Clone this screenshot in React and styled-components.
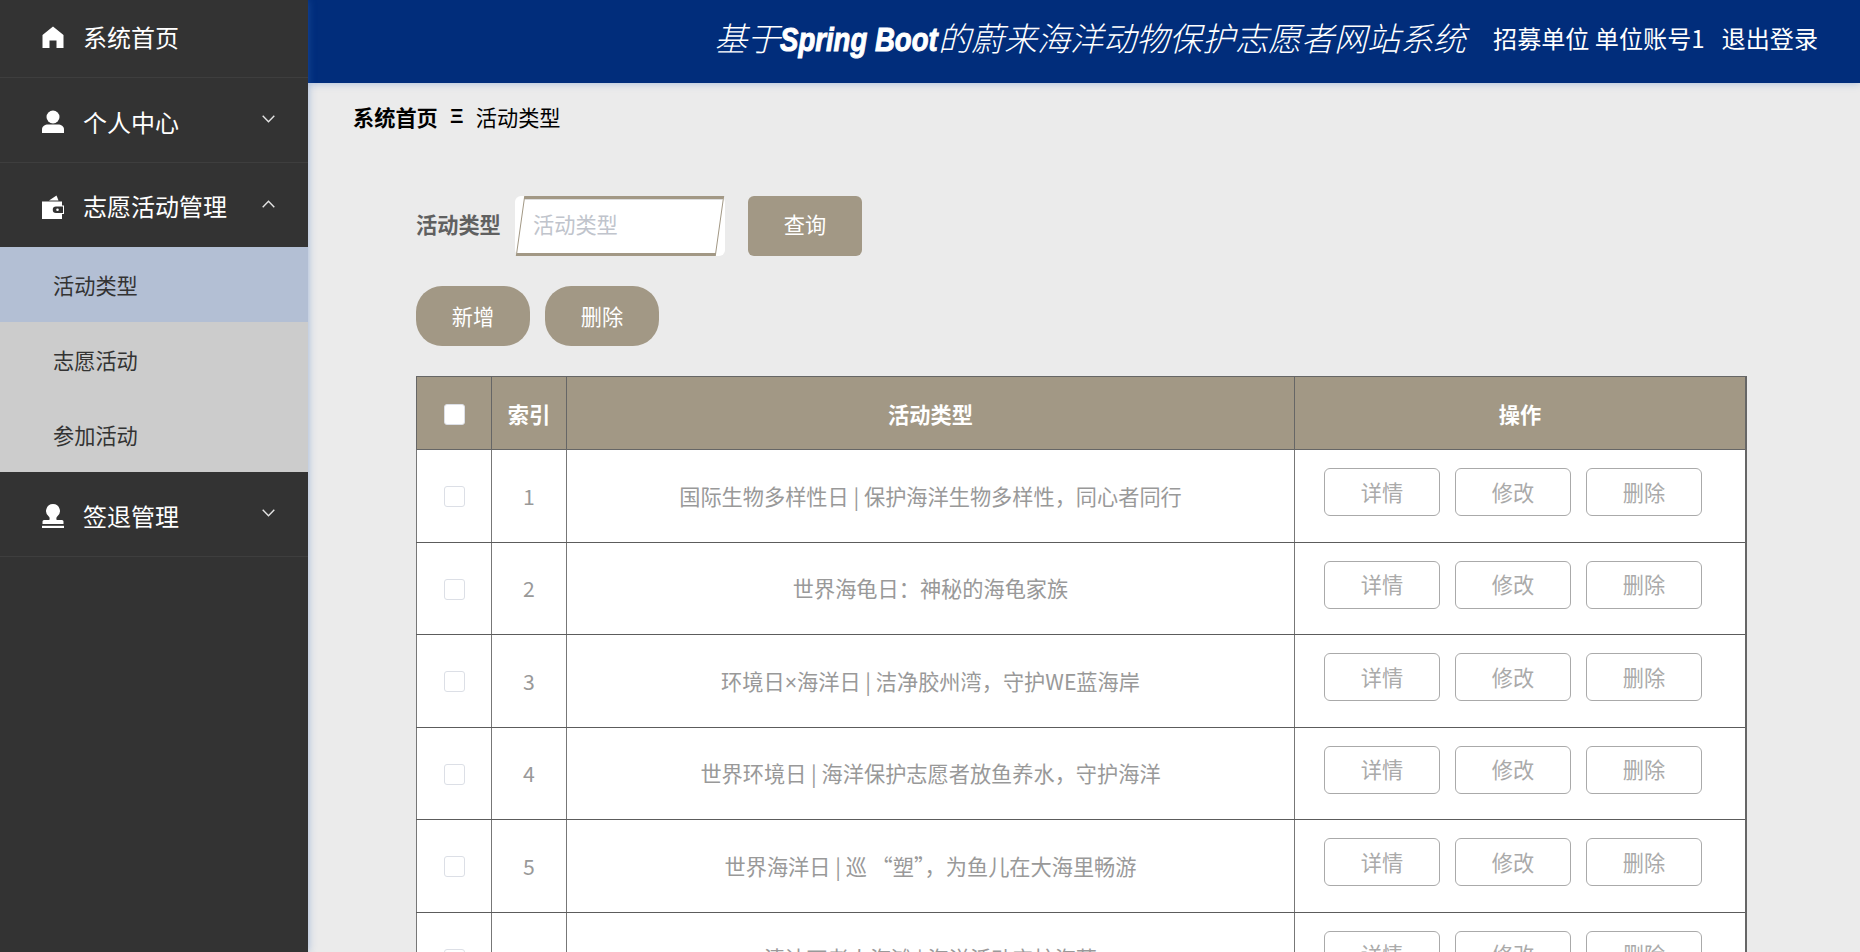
import React from 'react';
import styled, { createGlobalStyle } from 'styled-components';

const FONT = '"Noto Sans CJK SC", "Liberation Sans", sans-serif';
const TAN = '#a29885';

const GlobalStyle = createGlobalStyle`
  html, body {
    margin: 0;
    padding: 0;
    height: 100%;
    overflow: hidden;
    background: #ebebeb;
    font-family: ${FONT};
  }
  * {
    box-sizing: border-box;
  }
`;

const Page = styled.div`
  display: flex;
  height: 952px;
  overflow: hidden;
`;

const Sidebar = styled.aside`
  flex: 0 0 308px;
  height: 100%;
  background: #333;
  box-shadow: 0 0 8px rgba(60, 110, 190, 0.45);
  position: relative;
  z-index: 2;
`;

const menuHeight = (props) => {
  if (props.$first) return '78px';
  return props.$flat ? '84px' : '85px';
};

const MenuItem = styled.div`
  display: flex;
  align-items: center;
  height: ${menuHeight};
  padding: ${props => (props.$first ? '0 33px 4px 42px' : '3px 33px 0 42px')};
  border-bottom: 1px solid ${props => (props.$flat ? 'transparent' : '#3e3e3e')};
  color: #fff;
`;

const MenuIcon = styled.svg`
  flex: 0 0 22px;
  width: 22px;
  height: 24px;
  margin-top: 1px;
  fill: #fff;
`;

const MenuLabel = styled.span`
  flex: 1;
  margin-left: 19px;
  font-size: 24px;
  line-height: 32px;
`;

const Chevron = styled.svg`
  width: 13px;
  height: 8px;
  margin-bottom: 5px;
  fill: none;
  stroke: #e4e4e4;
  stroke-width: 1.4;
`;

const SubMenu = styled.div`
  background: #ccc;
`;

const SubItem = styled.div`
  height: 75px;
  padding-left: 53px;
  font-size: 21.2px;
  line-height: 75px;
  color: #333;
  background: ${props => (props.$active ? '#b3bfd4' : 'transparent')};
`;

const Main = styled.div`
  flex: 1;
  min-width: 0;
`;

const Header = styled.header`
  display: flex;
  justify-content: flex-end;
  align-items: center;
  height: 83px;
  padding: 0 42px 7px 0;
  background: #012d7b;
  color: #fff;
  box-shadow: 0 0 8px rgba(60, 110, 190, 0.4);
  position: relative;
  z-index: 1;
`;

const Title = styled.h1`
  margin: 0 27px 0 0;
  font-size: 33px;
  line-height: 44px;
  font-weight: 300;
  font-style: italic;
  white-space: nowrap;
`;

const TitleEn = styled.b`
  display: inline-block;
  margin-right: -31px;
  font-family: "Liberation Sans", sans-serif;
  font-weight: 700;
  -webkit-text-stroke: 1px #fff;
  transform: scaleX(0.835);
  transform-origin: left center;
`;

const UserText = styled.span`
  font-size: 24.1px;
  line-height: 32px;
  white-space: pre;
  margin-left: ${props => (props.$gap ? '17px' : '0')};
`;

const Content = styled.main`
  padding: 19px 113px 0 108px;
`;

const Breadcrumb = styled.nav`
  display: flex;
  align-items: center;
  height: 28px;
  margin: 0 0 66px -63px;
  font-size: 21.2px;
  color: #000;
`;

const CrumbHome = styled.strong`
  font-weight: 700;
`;

const CrumbSep = styled.span`
  width: 38px;
  text-align: center;
  font-family: "Liberation Sans", sans-serif;
  font-size: 21px;
  font-weight: 700;
`;

const FilterRow = styled.div`
  display: flex;
  align-items: center;
  height: 60px;
  margin-bottom: 30px;
`;

const FilterLabel = styled.label`
  width: 99px;
  padding: 0 0 5px;
  font-size: 21.2px;
  font-weight: 700;
  color: #606060;
`;

const InputShell = styled.div`
  position: relative;
  width: 210px;
  height: 60px;
  margin-right: 23px;
  border-radius: 6px;
  background: #fff;

  &::before {
    content: '';
    position: absolute;
    top: 0;
    bottom: 0;
    left: 5px;
    right: 5px;
    border: solid ${TAN};
    border-width: 3px 1px;
    box-shadow: inset 0 1px 0 #ddd;
    transform: skewX(-8deg);
  }
`;

const SearchInput = styled.input`
  position: relative;
  display: block;
  width: 100%;
  height: 100%;
  padding: 0 12px 5px 18px;
  border: 0;
  outline: 0;
  background: transparent;
  font-family: ${FONT};
  font-size: 21.2px;

  &::placeholder {
    color: #c0c4cc;
    opacity: 1;
  }
`;

const FilledButton = styled.button`
  width: 114px;
  height: 60px;
  margin-right: ${props => (props.$spaced ? '15px' : '0')};
  padding: 0 0 ${props => (props.$pill ? '2px' : '6px')};
  border: 0;
  border-radius: ${props => (props.$pill ? '26px' : '6px')};
  background: ${TAN};
  color: #fff;
  font-family: ${FONT};
  font-size: 21.2px;
`;

const ActionBar = styled.div`
  display: flex;
  margin-bottom: 30px;
`;

const Table = styled.table`
  width: 1331px;
  table-layout: fixed;
  border-collapse: collapse;
  background: #fff;
  border: 1px solid #666;
  border-right-width: 2px;
`;

const HeadCell = styled.th`
  height: 73px;
  padding: 0;
  border: 1px solid #666;
  background: ${TAN};
  color: #fff;
  font-size: 21.2px;
  font-weight: 700;
`;

const Cell = styled.td`
  height: 92.5px;
  padding: 0 0 1px;
  border: 1px solid #777;
  border-top-color: #5c5c5c;
  border-bottom-color: #5c5c5c;
  color: #999;
  font-size: 21.2px;
  text-align: center;
`;

const Check = styled.span`
  display: block;
  width: 21px;
  height: 21px;
  margin: 3px auto 0;
  border: 1px solid #dcdfe6;
  border-radius: 3px;
  background: #fff;
`;

const TimesSign = styled.span`
  font-family: "Liberation Sans", sans-serif;
`;

const RowActions = styled.div`
  display: flex;
  gap: 15px;
  padding: 0 0 6px 29px;
`;

const OutlineButton = styled.button`
  width: 116px;
  height: 48px;
  padding: 0 0 2px;
  border: 1px solid #aaa;
  border-radius: 6px;
  background: #fff;
  color: #aaa;
  font-family: ${FONT};
  font-size: 21.2px;
`;

const rows = [
  '国际生物多样性日 | 保护海洋生物多样性，同心者同行',
  '世界海龟日：神秘的海龟家族',
  <>环境日<TimesSign>×</TimesSign>海洋日 | 洁净胶州湾，守护WE蓝海岸</>,
  '世界环境日 | 海洋保护志愿者放鱼养水，守护海洋',
  '世界海洋日 | 巡 “塑”，为鱼儿在大海里畅游',
  '清洁石老人海滩 | 海洋活动守护海草',
];

const ArrowDown = () => (
  <Chevron viewBox="0 0 13 8"><polyline points="0.7,0.8 6.5,6.8 12.3,0.8" /></Chevron>
);

const ArrowUp = () => (
  <Chevron viewBox="0 0 13 8"><polyline points="0.7,7.2 6.5,1.2 12.3,7.2" /></Chevron>
);

export default function App() {
  return (
    <Page>
      <GlobalStyle />
      <Sidebar>
        <MenuItem $first>
          <MenuIcon viewBox="0 0 22 24"><path d="M11 1.500 21.500 10v13h-7v-7.500h-7V23H.5V10z" /></MenuIcon>
          <MenuLabel>系统首页</MenuLabel>
        </MenuItem>
        <MenuItem>
          <MenuIcon viewBox="0 0 22 24"><circle cx="11" cy="7" r="6.500" /><path d="M0 23v-3.500C0 16 3 14.500 6 14.500h10c3 0 6 1.500 6 5V23z" /></MenuIcon>
          <MenuLabel>个人中心</MenuLabel>
          <ArrowDown />
        </MenuItem>
        <MenuItem $flat>
          <MenuIcon viewBox="0 0 22 24"><path d="M7 5.500 14.500 0.500l2 5z" /><path fillRule="evenodd" d="M0 6.500h20v4h2v8.500h-2v5H0zM14 11.500h7v6.500h-7a3.250 3.250 0 0 1 0-6.500zM15.500 13.400a1.300 1.300 0 1 0 0 2.600 1.300 1.300 0 0 0 0-2.600z" /></MenuIcon>
          <MenuLabel>志愿活动管理</MenuLabel>
          <ArrowUp />
        </MenuItem>
        <SubMenu>
          <SubItem $active>活动类型</SubItem>
          <SubItem>志愿活动</SubItem>
          <SubItem>参加活动</SubItem>
        </SubMenu>
        <MenuItem>
          <MenuIcon viewBox="0 0 22 24"><path d="M11 0a7 7 0 0 1 4 12.700c-.8.700-.8 2.300-.3 3.300H20a1.500 1.500 0 0 1 1.500 1.500V20H.5v-2.500A1.500 1.500 0 0 1 2 16h5.300c.5-1 .5-2.600-.3-3.300A7 7 0 0 1 11 0z" /><rect y="21.800" width="22" height="2.200" /></MenuIcon>
          <MenuLabel>签退管理</MenuLabel>
          <ArrowDown />
        </MenuItem>
      </Sidebar>
      <Main>
        <Header>
          <Title>基于<TitleEn>Spring Boot</TitleEn>的蔚来海洋动物保护志愿者网站系统</Title>
          <UserText>招募单位 单位账号1</UserText>
          <UserText $gap>退出登录</UserText>
        </Header>
        <Content>
          <Breadcrumb>
            <CrumbHome>系统首页</CrumbHome>
            <CrumbSep>Ξ</CrumbSep>
            <span>活动类型</span>
          </Breadcrumb>
          <FilterRow>
            <FilterLabel>活动类型</FilterLabel>
            <InputShell><SearchInput placeholder="活动类型" /></InputShell>
            <FilledButton>查询</FilledButton>
          </FilterRow>
          <ActionBar>
            <FilledButton $pill $spaced>新增</FilledButton>
            <FilledButton $pill>删除</FilledButton>
          </ActionBar>
          <Table>
            <colgroup>
              <col width="75" />
              <col width="75" />
              <col width="728" />
              <col />
            </colgroup>
            <thead>
              <tr>
                <HeadCell><Check /></HeadCell>
                <HeadCell>索引</HeadCell>
                <HeadCell>活动类型</HeadCell>
                <HeadCell>操作</HeadCell>
              </tr>
            </thead>
            <tbody>
              {rows.map((name, i) => (
                <tr key={i}>
                  <Cell><Check /></Cell>
                  <Cell>{i + 1}</Cell>
                  <Cell>{name}</Cell>
                  <Cell>
                    <RowActions>
                      <OutlineButton>详情</OutlineButton>
                      <OutlineButton>修改</OutlineButton>
                      <OutlineButton>删除</OutlineButton>
                    </RowActions>
                  </Cell>
                </tr>
              ))}
            </tbody>
          </Table>
        </Content>
      </Main>
    </Page>
  );
}
